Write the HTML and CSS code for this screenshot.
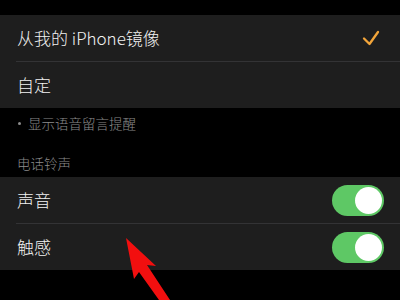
FILE: index.html
```html
<!DOCTYPE html>
<html lang="zh">
<head>
<meta charset="utf-8">
<link rel="stylesheet" href="styles.css">
</head>
<body>
<div class="screen">
  <div class="top-gap"></div>
  <div class="group">
    <div class="row">
      <span class="label">从我的 iPhone镜像</span>
      <svg class="check" width="18" height="16" viewBox="0 0 18 16"><polyline points="2,8.5 7.5,14 16,2" fill="none" stroke="#f2a53a" stroke-width="2.3" stroke-linecap="round" stroke-linejoin="round"/></svg>
    </div>
    <div class="sep"></div>
    <div class="row">
      <span class="label">自定</span>
    </div>
  </div>
  <div class="footer"><span class="dot"></span><span>显示语音留言提醒</span></div>
  <div class="header">电话铃声</div>
  <div class="group">
    <div class="row">
      <span class="label">声音</span>
      <span class="toggle"><span class="knob"></span></span>
    </div>
    <div class="sep"></div>
    <div class="row">
      <span class="label">触感</span>
      <span class="toggle"><span class="knob"></span></span>
    </div>
  </div>
  <svg class="arrow" width="400" height="300" viewBox="0 0 400 300">
    <polygon points="126,238 156,266 147,265 170,300 159,300 139,272 134,279" fill="#f20f0f"/>
  </svg>
</div>
</body>
</html>
```
FILE: styles.css
```css
html, body {
  margin: 0;
  padding: 0;
  background: #000;
}
.screen {
  position: relative;
  width: 400px;
  height: 300px;
  overflow: hidden;
  background: #000;
  font-family: "Noto Sans CJK SC", "Noto Sans", sans-serif;
  font-weight: 300;
}
.top-gap {
  height: 15px;
}
.group {
  background: #1e1e1e;
}
.row {
  height: 46px;
  display: flex;
  align-items: center;
  justify-content: space-between;
  padding: 0 17px 0 17px;
}
.label {
  color: #f2f2f2;
  font-size: 17px;
  line-height: 20px;
}
.sep {
  height: 1px;
  margin-left: 16px;
  background: #333335;
}
.check {
  margin-right: 3px;
}
.footer {
  display: flex;
  align-items: center;
  color: #8c8c8c;
  font-size: 13.5px;
  line-height: 18px;
  padding: 6px 0 0 18px;
}
.dot {
  width: 3px;
  height: 3px;
  border-radius: 50%;
  background: #8c8c8c;
  margin-right: 7px;
}
.header {
  color: #8c8c8c;
  font-size: 13.5px;
  line-height: 18px;
  padding: 22px 0 5px 17px;
}
.toggle {
  width: 52px;
  height: 31px;
  border-radius: 16px;
  background: #5ec865;
  display: flex;
  align-items: center;
  justify-content: flex-end;
  padding-right: 2px;
  box-sizing: border-box;
  margin-right: -1px;
}
.knob {
  width: 27px;
  height: 27px;
  border-radius: 50%;
  background: #fff;
}
.arrow {
  position: absolute;
  left: 0;
  top: 0;
}
```
